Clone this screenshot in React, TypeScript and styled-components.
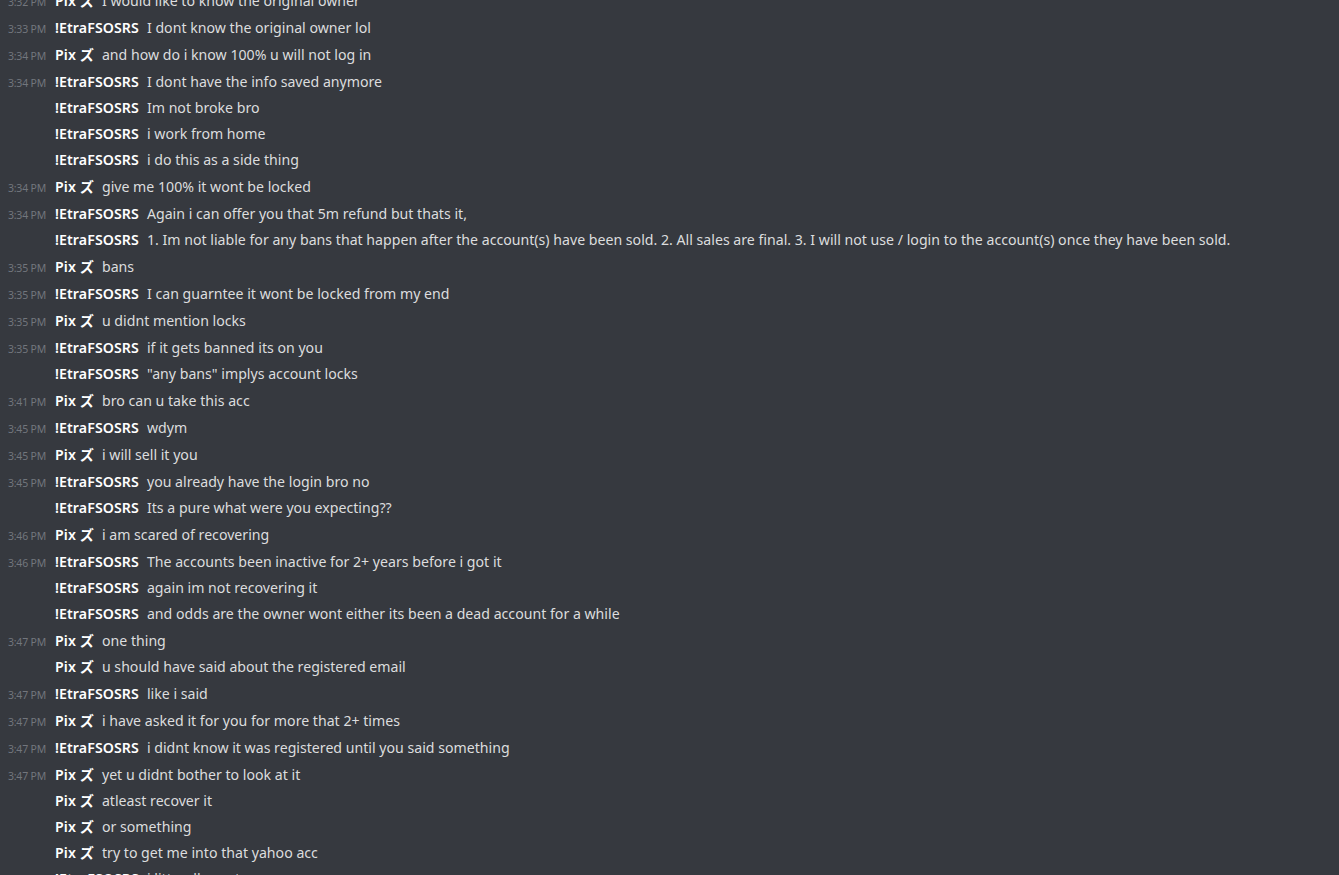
import { ReactElement } from "react";
import styled, { createGlobalStyle } from "styled-components";

const GlobalStyle = createGlobalStyle`
  html, body {
    margin: 0;
    padding: 0;
    background: #36393f;
    overflow: hidden;
  }
`;

const Chat = styled.div`
  background: #36393f;
  height: 875px;
  overflow: hidden;
  font-family: "Noto Sans", "Open Sans", "Noto Sans CJK JP", sans-serif;
`;

const List = styled.div`
  margin-top: -13px;
  display: flex;
  flex-direction: column;
`;

const Row = styled.div<{ $start: boolean }>`
  display: flex;
  align-items: baseline;
  height: 26px;
  line-height: 26px;
  margin-top: ${p => (p.$start ? "1px" : "0")};
  white-space: nowrap;
`;

const Stamp = styled.span`
  width: 46px;
  flex: none;
  text-align: right;
  font-size: 10.5px;
  color: #72767d;
  letter-spacing: -0.2px;
`;

const Author = styled.span`
  margin-left: 9px;
  font-size: 14.15px;
  font-weight: 600;
  letter-spacing: 0.1px;
  color: #ffffff;
`;

const Text = styled.span`
  margin-left: 8px;
  font-size: 14.15px;
  color: #dcddde;
`;

const E = "!EtraFSOSRS";
const P = "Pix ズ";

// [time or null for a continued group, author, message]
const messages: [string | null, string, string][] = [
  ["3:32 PM", P, "I would like to know the original owner"],
  ["3:33 PM", E, "I dont know the original owner lol"],
  ["3:34 PM", P, "and how do i know 100% u will not log in"],
  ["3:34 PM", E, "I dont have the info saved anymore"],
  [null, E, "Im not broke bro"],
  [null, E, "i work from home"],
  [null, E, "i do this as a side thing"],
  ["3:34 PM", P, "give me 100% it wont be locked"],
  ["3:34 PM", E, "Again i can offer you that 5m refund but thats it,"],
  [
    null,
    E,
    "1. Im not liable for any bans that happen after the account(s) have been sold. 2. All sales are final. 3. I will not use / login to the account(s) once they have been sold.",
  ],
  ["3:35 PM", P, "bans"],
  ["3:35 PM", E, "I can guarntee it wont be locked from my end"],
  ["3:35 PM", P, "u didnt mention locks"],
  ["3:35 PM", E, "if it gets banned its on you"],
  [null, E, "\"any bans\" implys account locks"],
  ["3:41 PM", P, "bro can u take this acc"],
  ["3:45 PM", E, "wdym"],
  ["3:45 PM", P, "i will sell it you"],
  ["3:45 PM", E, "you already have the login bro no"],
  [null, E, "Its a pure what were you expecting??"],
  ["3:46 PM", P, "i am scared of recovering"],
  ["3:46 PM", E, "The accounts been inactive for 2+ years before i got it"],
  [null, E, "again im not recovering it"],
  [null, E, "and odds are the owner wont either its been a dead account for a while"],
  ["3:47 PM", P, "one thing"],
  [null, P, "u should have said about the registered email"],
  ["3:47 PM", E, "like i said"],
  ["3:47 PM", P, "i have asked it for you for more that 2+ times"],
  ["3:47 PM", E, "i didnt know it was registered until you said something"],
  ["3:47 PM", P, "yet u didnt bother to look at it"],
  [null, P, "atleast recover it"],
  [null, P, "or something"],
  [null, P, "try to get me into that yahoo acc"],
  [null, E, "i litterally cant"],
];

const App = (): ReactElement => (
  <>
    <GlobalStyle />
    <Chat>
      <List>
        {messages.map(([time, author, text], i) => (
          <Row key={i} $start={time !== null}>
            <Stamp>{time}</Stamp>
            <Author>{author}</Author>
            <Text>{text}</Text>
          </Row>
        ))}
      </List>
    </Chat>
  </>
);

export default App;
